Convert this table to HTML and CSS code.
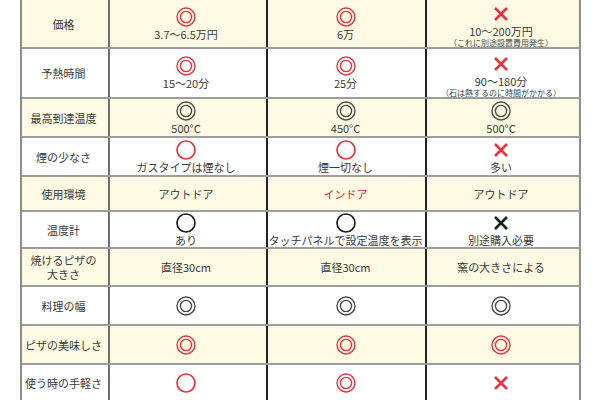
FILE: index.html
```html
<!DOCTYPE html>
<html lang="ja">
<head>
<meta charset="utf-8">
<link rel="stylesheet" href="styles.css">
</head>
<body>
<svg class="defs" xmlns="http://www.w3.org/2000/svg">
  <symbol id="dbl" viewBox="0 0 20 20"><circle cx="10" cy="10" r="9" fill="none" stroke="currentColor" stroke-width="1.4"/><circle cx="10" cy="10" r="5.6" fill="none" stroke="currentColor" stroke-width="1.4"/></symbol>
  <symbol id="sgl" viewBox="0 0 20 20"><circle cx="10" cy="10" r="9" fill="none" stroke="currentColor" stroke-width="1.7"/></symbol>
  <symbol id="crs" viewBox="0 0 20 20"><path d="M4 4L16 16M16 4L4 16" fill="none" stroke="currentColor" stroke-width="2.6"/></symbol>
</svg>
<div class="table">
  <div class="row cream r0">
    <div class="cell label">価格</div>
    <div class="cell c1"><svg class="sym red"><use href="#dbl"/></svg><span class="val">3.7〜6.5万円</span></div>
    <div class="cell c2"><svg class="sym red"><use href="#dbl"/></svg><span class="val">6万</span></div>
    <div class="cell c3"><svg class="sym red"><use href="#crs"/></svg><span class="val">10〜200万円</span><span class="note">（これに別途設置費用発生）</span></div>
  </div>
  <div class="row r1">
    <div class="cell label">予熱時間</div>
    <div class="cell c1"><svg class="sym red"><use href="#dbl"/></svg><span class="val">15〜20分</span></div>
    <div class="cell c2"><svg class="sym red"><use href="#dbl"/></svg><span class="val">25分</span></div>
    <div class="cell c3"><svg class="sym red"><use href="#crs"/></svg><span class="val">90〜180分</span><span class="note">（石は熱するのに時間がかかる）</span></div>
  </div>
  <div class="row cream r2">
    <div class="cell label">最高到達温度</div>
    <div class="cell c1"><svg class="sym gray"><use href="#dbl"/></svg><span class="val">500°C</span></div>
    <div class="cell c2"><svg class="sym gray"><use href="#dbl"/></svg><span class="val">450°C</span></div>
    <div class="cell c3"><svg class="sym gray"><use href="#dbl"/></svg><span class="val">500°C</span></div>
  </div>
  <div class="row r3">
    <div class="cell label">煙の少なさ</div>
    <div class="cell c1"><svg class="sym red"><use href="#sgl"/></svg><span class="val">ガスタイプは煙なし</span></div>
    <div class="cell c2"><svg class="sym red"><use href="#sgl"/></svg><span class="val">煙一切なし</span></div>
    <div class="cell c3"><svg class="sym red"><use href="#crs"/></svg><span class="val">多い</span></div>
  </div>
  <div class="row cream r4">
    <div class="cell label">使用環境</div>
    <div class="cell c1"><span class="val">アウトドア</span></div>
    <div class="cell c2"><span class="val redtext">インドア</span></div>
    <div class="cell c3"><span class="val">アウトドア</span></div>
  </div>
  <div class="row r5">
    <div class="cell label">温度計</div>
    <div class="cell c1"><svg class="sym black"><use href="#sgl"/></svg><span class="val">あり</span></div>
    <div class="cell c2"><svg class="sym black"><use href="#sgl"/></svg><span class="val">タッチパネルで設定温度を表示</span></div>
    <div class="cell c3"><svg class="sym black"><use href="#crs"/></svg><span class="val">別途購入必要</span></div>
  </div>
  <div class="row cream r6">
    <div class="cell label"><span class="ln">焼けるピザの</span><span class="ln">大きさ</span></div>
    <div class="cell c1"><span class="val">直径30cm</span></div>
    <div class="cell c2"><span class="val">直径30cm</span></div>
    <div class="cell c3"><span class="val">窯の大きさによる</span></div>
  </div>
  <div class="row r7">
    <div class="cell label">料理の幅</div>
    <div class="cell c1"><svg class="sym gray"><use href="#dbl"/></svg></div>
    <div class="cell c2"><svg class="sym gray"><use href="#dbl"/></svg></div>
    <div class="cell c3"><svg class="sym gray"><use href="#dbl"/></svg></div>
  </div>
  <div class="row cream r8">
    <div class="cell label">ピザの美味しさ</div>
    <div class="cell c1"><svg class="sym red"><use href="#dbl"/></svg></div>
    <div class="cell c2"><svg class="sym red"><use href="#dbl"/></svg></div>
    <div class="cell c3"><svg class="sym red"><use href="#dbl"/></svg></div>
  </div>
  <div class="row r9">
    <div class="cell label">使う時の手軽さ</div>
    <div class="cell c1"><svg class="sym red"><use href="#sgl"/></svg></div>
    <div class="cell c2"><svg class="sym red"><use href="#dbl"/></svg></div>
    <div class="cell c3"><svg class="sym red"><use href="#crs"/></svg></div>
  </div>
</div>
</body>
</html>
```
FILE: styles.css
```css
html, body {
  margin: 0;
  padding: 0;
  background: #ffffff;
  overflow: hidden;
}
body {
  font-family: "Noto Sans CJK JP", "Noto Sans", sans-serif;
  color: #3a3a3a;
}
.defs {
  display: none;
}
.table {
  margin-left: 20px;
  width: 561px;
  box-sizing: border-box;
  border-left: 2px solid #8c8c8c;
}
.row {
  display: grid;
  grid-template-columns: 88px 158px 159px 154px;
  border-bottom: 2px solid #9d9d9d;
  box-sizing: border-box;
  background: #ffffff;
}
.row.cream {
  background: #fefae3;
}
.r0 { height: 49px; }
.r1 { height: 50px; }
.r2 { height: 39px; }
.r3 { height: 39px; }
.r4 { height: 35px; }
.r5 { height: 37px; }
.r6 { height: 38px; }
.r7 { height: 39px; }
.r8 { height: 39px; }
.r9 { height: 38px; }
.cell {
  display: flex;
  flex-direction: column;
  align-items: center;
  justify-content: center;
  box-sizing: border-box;
  border-right: 2px solid #222222;
  padding-right: 4px;
  min-width: 0;
}
.cell.label {
  border-right-color: #707070;
  font-size: 11px;
  line-height: 14px;
  text-align: center;
  padding-right: 3px;
}
.ln {
  display: block;
  white-space: nowrap;
}
.cell.c3 {
  border-right-color: #8c8c8c;
}
.cell.c2 {
  padding-right: 2px;
}
.val {
  font-size: 11px;
  line-height: 14px;
  white-space: nowrap;
}
.note {
  font-size: 8px;
  line-height: 9px;
  margin-bottom: -4px;
  white-space: nowrap;
  color: #444444;
}
.sym {
  display: block;
  width: 20px;
  height: 20px;
}
.red { color: #e5343d; }
.gray { color: #4a4a4a; }
.black { color: #1e1e1e; }
.redtext { color: #d8262f; }
```
